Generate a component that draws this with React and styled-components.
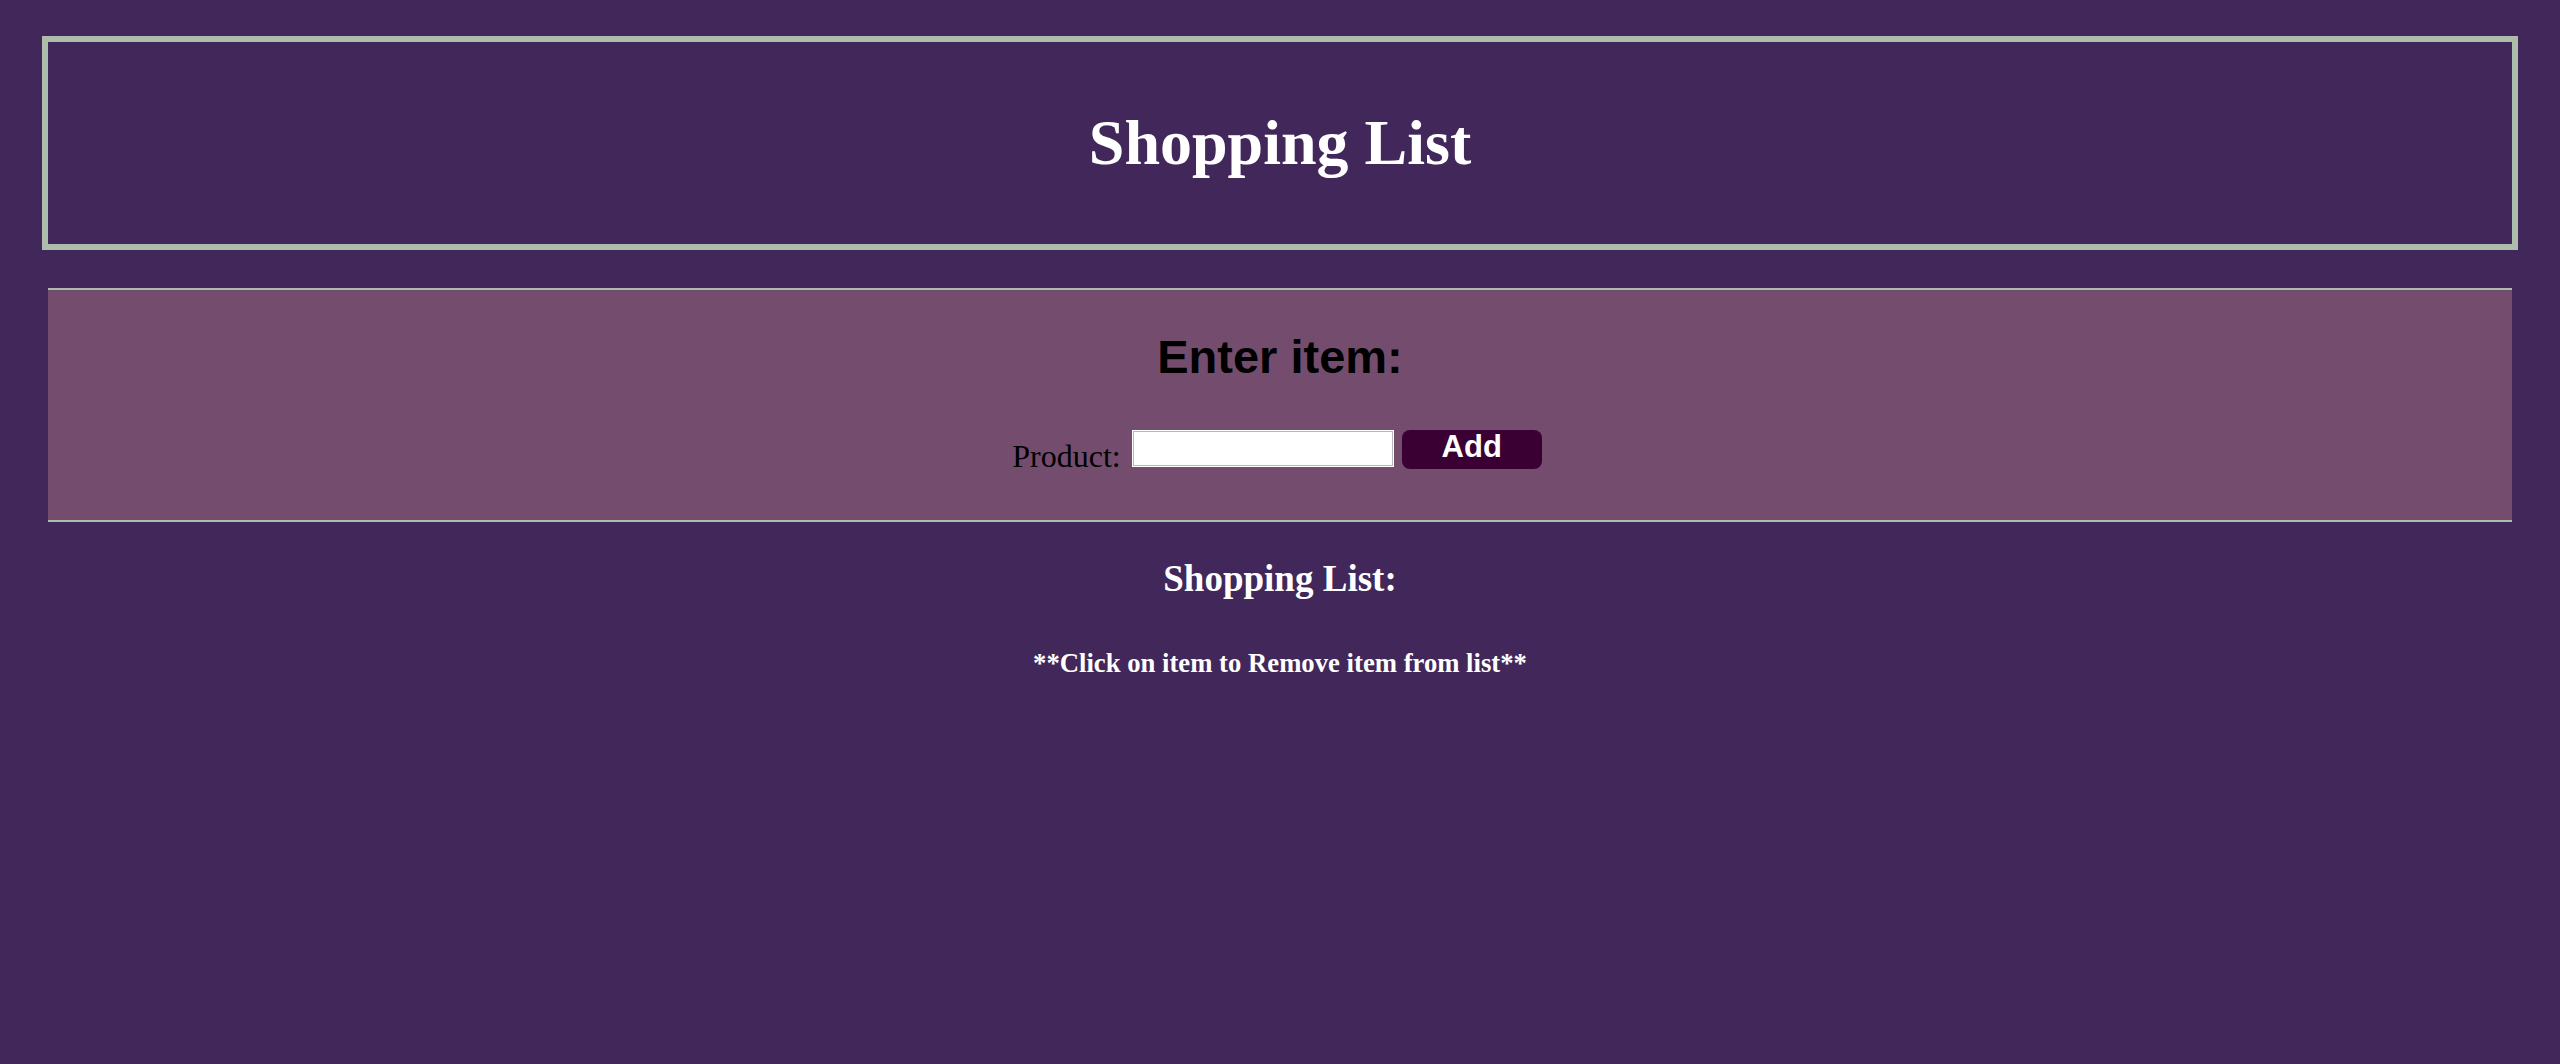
import React, { useState } from 'react';
import styled, { createGlobalStyle } from 'styled-components';

const GlobalStyle = createGlobalStyle`
    html, body {
        margin: 0;
        padding: 0;
        background-color: #41275a;
    }
    body {
        font-family: "Liberation Serif", "Times New Roman", serif;
    }
`

const Page = styled.div`
    min-height: 100vh;
    box-sizing: border-box;
    padding: 36px 42px;
    background-color: #41275a;
`

const Header = styled.header`
    height: 202px;
    border: 6px solid #adbcab;
    display: flex;
    align-items: center;
    justify-content: center;
`

const Title = styled.h1`
    margin: 0;
    font-size: 64px;
    line-height: 1;
    font-weight: bold;
    color: #ffffff;
`

const EntrySection = styled.section`
    margin: 38px 6px 0;
    padding: 40px 0 48px;
    background-color: #744d6e;
    border-top: 2px solid #adbcab;
    border-bottom: 2px solid #adbcab;
    display: flex;
    flex-direction: column;
    align-items: center;
`

const EntryTitle = styled.h2`
    margin: 0 0 46px;
    font-family: "Liberation Sans", Arial, sans-serif;
    font-size: 47px;
    line-height: 54px;
    font-weight: bold;
    color: #000000;
`

const Form = styled.form`
    display: flex;
    align-items: flex-start;
    gap: 11px;
    margin-left: -6px;
`

const Label = styled.label`
    padding-top: 10px;
    font-size: 32px;
    line-height: 1;
    color: #000000;
`

const Input = styled.input`
    width: 262px;
    height: 37px;
    box-sizing: border-box;
    margin: 0;
    padding: 0 4px;
    border: 1px solid #ffffff;
    box-shadow: inset 0 0 0 1px #b9b9b9;
    background: #ffffff;
    outline: none;
    font-size: 20px;
`

const AddButton = styled.button`
    width: 140px;
    height: 39px;
    margin-left: -3px;
    border: none;
    border-radius: 8px;
    background-color: #3b0033;
    color: #ffffff;
    font-family: "Liberation Sans", Arial, sans-serif;
    font-size: 31px;
    font-weight: bold;
    line-height: 1;
    padding: 0 0 6px;
    cursor: pointer;
`

const ListArea = styled.div`
    display: flex;
    flex-direction: column;
    align-items: center;
    color: #ffffff;
`

const ListTitle = styled.h3`
    margin: 36px 0 0;
    font-size: 37px;
    line-height: 1.15;
    font-weight: bold;
`

const Hint = styled.h4`
    margin: 47px 0 0;
    font-size: 26.7px;
    line-height: 1.15;
    font-weight: bold;
`

const Items = styled.ul`
    list-style: none;
    margin: 16px 0 0;
    padding: 0;
`

const Item = styled.li`
    font-size: 26px;
    cursor: pointer;
`

function App() {
    const [product, setProduct] = useState("")
    const [items, setItems] = useState([])

    const handleAdd = (e) => {
        e.preventDefault()
        if (!product.trim()) return
        setItems([...items, product.trim()])
        setProduct("")
    }

    return (
        <>
            <GlobalStyle />
            <Page>
                <Header>
                    <Title>Shopping List</Title>
                </Header>
                <EntrySection>
                    <EntryTitle>Enter item:</EntryTitle>
                    <Form onSubmit={handleAdd}>
                        <Label htmlFor="product">Product:</Label>
                        <Input id="product" type="text" value={product} onChange={(e) => setProduct(e.target.value)} />
                        <AddButton type="submit">Add</AddButton>
                    </Form>
                </EntrySection>
                <ListArea>
                    <ListTitle>Shopping List:</ListTitle>
                    <Hint>**Click on item to Remove item from list**</Hint>
                    {items.length > 0 && (
                        <Items>
                            {items.map((item, i) => (
                                <Item key={i} onClick={() => setItems(items.filter((_, j) => j !== i))}>{item}</Item>
                            ))}
                        </Items>
                    )}
                </ListArea>
            </Page>
        </>
    );
}

export default App;
